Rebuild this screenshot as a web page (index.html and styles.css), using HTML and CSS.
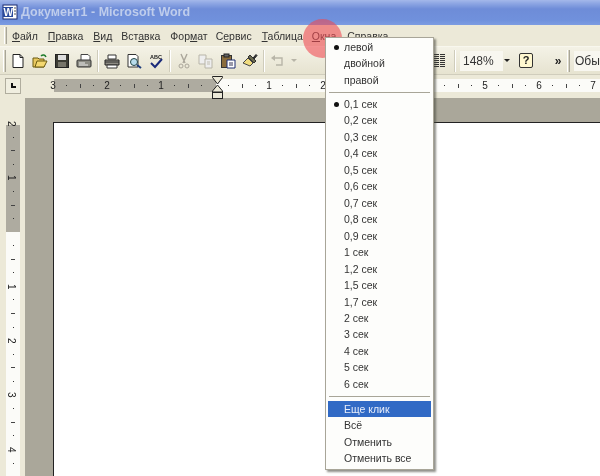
FILE: index.html
```html
<!DOCTYPE html>
<html lang="ru">
<head>
<meta charset="utf-8">
<title>Документ1 - Microsoft Word</title>
<link rel="stylesheet" href="styles.css">
</head>
<body>
<div class="app">
  <header class="titlebar">
    <svg class="word" width="16" height="16" viewBox="0 0 16 16"><rect x="1" y="1" width="14" height="14" fill="#fff" stroke="#1c2c70"/><rect x="1" y="3" width="10" height="10" fill="#2a4a9c"/><text x="1.5" y="11.5" class="wtext">W</text><path d="M12 4h2M12 7h2M12 10h2" stroke="#555"/></svg>
    <span class="titletext">Документ1 - Microsoft Word</span>
  </header>
  <nav class="menubar">
    <i class="grip"></i>
    <span class="mi m1"><u>Ф</u>айл</span>
    <span class="mi m2"><u>П</u>равка</span>
    <span class="mi m3"><u>В</u>ид</span>
    <span class="mi m4">Вст<u>а</u>вка</span>
    <span class="mi m5">Фор<u>м</u>ат</span>
    <span class="mi m6">С<u>е</u>рвис</span>
    <span class="mi m7"><u>Т</u>аблица</span>
    <span class="mi m8"><u>О</u>кна</span>
    <span class="mi m9"><u>С</u>правка</span>
  </nav>
  <div class="toolbar">
    <i class="grip tall"></i>
    <span class="tb"><svg width="16" height="16" viewBox="0 0 16 16"><path d="M3 1.5h7l3 3v10H3z" fill="#fff" stroke="#222"/><path d="M10 1.5v3h3" fill="none" stroke="#222"/></svg></span>
    <span class="tb"><svg width="16" height="16" viewBox="0 0 16 16"><path d="M1 5h5l1 1h5v8H1z" fill="#e8c860" stroke="#6a5a10"/><path d="M3 14l2-6h10l-3 6z" fill="#f4d870" stroke="#6a5a10"/><path d="M9 3c2-2 4-1 5 1" fill="none" stroke="#1c7c2c" stroke-width="1.5"/></svg></span>
    <span class="tb"><svg width="16" height="16" viewBox="0 0 16 16"><rect x="1.5" y="1.5" width="13" height="13" fill="#3c3c34" stroke="#222"/><rect x="4" y="2" width="8" height="5" fill="#ddd"/><rect x="4" y="9" width="8" height="5" fill="#77756a"/></svg></span>
    <span class="tb"><svg width="16" height="16" viewBox="0 0 16 16"><path d="M5 1.5h7l2 2V8H5z" fill="#fff" stroke="#444"/><rect x="1" y="7" width="14" height="7" rx="1" fill="#8c8c84" stroke="#333"/><path d="M3 10h6M3 12h9" stroke="#eee"/></svg></span>
    <i class="tsep s1"></i>
    <span class="tb"><svg width="16" height="16" viewBox="0 0 16 16"><path d="M4 2h8v4H4z" fill="#fff" stroke="#333"/><path d="M1 7h14v5H1z" fill="#8e8c84" stroke="#222"/><path d="M3 12h10v3H3z" fill="#fff" stroke="#333"/><path d="M1 9h14" stroke="#333"/></svg></span>
    <span class="tb"><svg width="16" height="16" viewBox="0 0 16 16"><path d="M2 1.5h8l2 2V14H2z" fill="#fff" stroke="#333"/><circle cx="8" cy="9" r="3.5" fill="#b8dcec" stroke="#244"/><path d="M11 12l4 3" stroke="#1a3a7a" stroke-width="2"/></svg></span>
    <span class="tb"><svg width="16" height="16" viewBox="0 0 16 16"><path d="M3 10l4 4 7-8" fill="none" stroke="#1a2a7a" stroke-width="2"/><text x="2" y="6" class="abc">ABC</text></svg></span>
    <i class="tsep s2"></i>
    <span class="tb"><svg width="16" height="16" viewBox="0 0 16 16" class="dim"><path d="M5 1l4 9M11 1L7 10" stroke="#aaa69a" fill="none" stroke-width="1.4"/><circle cx="5" cy="13" r="2" fill="none" stroke="#aaa69a"/><circle cx="11" cy="13" r="2" fill="none" stroke="#aaa69a"/></svg></span>
    <span class="tb"><svg width="16" height="16" viewBox="0 0 16 16"><path d="M1 2h7v9H1z" fill="#eee" stroke="#b8b5a8"/><path d="M7 6h7v9H7z" fill="#eee" stroke="#b8b5a8"/><path d="M9 9h3M9 11h3" stroke="#c0bdb0"/></svg></span>
    <span class="tb"><svg width="16" height="16" viewBox="0 0 16 16"><rect x="1.5" y="2.5" width="10" height="12" fill="#8a6c3c" stroke="#333"/><rect x="4" y="1" width="5" height="3" fill="#666" stroke="#222"/><path d="M7 7h8v8H7z" fill="#fff" stroke="#1c2c70"/><path d="M9 10h4M9 12h4" stroke="#335"/></svg></span>
    <span class="tb"><svg width="16" height="16" viewBox="0 0 16 16"><path d="M6 5l5 5-3 3-7-3z" fill="#f0dc80" stroke="#444"/><path d="M5 4.500l6 6 2-2-6-6z" fill="#6a6a50" stroke="#333" transform="translate(1 -.5)"/><path d="M11 5l3-3.500 1 1-3 3.500" fill="#333" stroke="#222"/></svg></span>
    <i class="tsep s3"></i>
    <span class="tb"><svg width="16" height="16" viewBox="0 0 16 16"><path d="M3 5h9v7H6" fill="none" stroke="#b8b5a8" stroke-width="1.4"/><path d="M1 5l4-3v6z" fill="#b8b5a8"/></svg></span>
    <span class="drop"></span>
    <span class="right">
      <span class="cols"><i></i><i></i><i></i></span>
      <i class="tsep s4"></i>
      <span class="zoombox">148%</span>
      <span class="arrow"></span>
      <span class="help">?</span>
      <span class="more">»</span>
      <i class="grip tall g2"></i>
      <span class="style">Обычный</span>
    </span>
  </div>
  <div class="rulerrow">
    <span class="tabbtn"><i></i></span>
    <div class="hruler">
      <div class="ticks">
        <b>3</b><s></s><em></em><s></s><b>2</b><s></s><em></em><s></s><b>1</b><s></s><em></em><s></s>
        <b class="none"></b><s></s><em></em><s></s><b>1</b><s></s><em></em><s></s><b>2</b><s></s><em></em><s></s><b>3</b><s></s><em></em><s></s><b>4</b><s></s><em></em><s></s><b>5</b><s></s><em></em><s></s><b>6</b><s></s><em></em><s></s><b>7</b>
      </div>
      <svg class="marker" width="14" height="24" viewBox="0 0 14 24"><path d="M1.500.5h10v1L6.500 8 1.500 1.500z" fill="#ece9d8" stroke="#222"/><path d="M6.500 9l5 6v1h-10v-1z" fill="#ece9d8" stroke="#222"/><rect x="1.500" y="16.500" width="10" height="6" fill="#ece9d8" stroke="#222"/></svg>
    </div>
  </div>
  <div class="work">
    <aside class="vside">
      <div class="vruler">
        <div class="vgrey"><b class="first">2</b><s></s><em></em><s></s><b>1</b><s></s><em></em><s></s></div>
        <div class="vwhite"><s></s><em></em><s></s><b>1</b><s></s><em></em><s></s><b>2</b><s></s><em></em><s></s><b>3</b><s></s><em></em><s></s><b>4</b><s></s><em></em></div>
      </div>
    </aside>
    <main class="desk"><div class="sheet"></div></main>
  </div>
  <div class="spot"></div>
  <div class="popup">
    <div class="pi on">левой</div>
    <div class="pi">двойной</div>
    <div class="pi">правой</div>
    <hr class="h1">
    <div class="pi on">0,1 сек</div>
    <div class="pi">0,2 сек</div>
    <div class="pi">0,3 сек</div>
    <div class="pi">0,4 сек</div>
    <div class="pi">0,5 сек</div>
    <div class="pi">0,6 сек</div>
    <div class="pi">0,7 сек</div>
    <div class="pi">0,8 сек</div>
    <div class="pi">0,9 сек</div>
    <div class="pi">1 сек</div>
    <div class="pi">1,2 сек</div>
    <div class="pi">1,5 сек</div>
    <div class="pi">1,7 сек</div>
    <div class="pi">2 сек</div>
    <div class="pi">3 сек</div>
    <div class="pi">4 сек</div>
    <div class="pi">5 сек</div>
    <div class="pi">6 сек</div>
    <hr>
    <div class="pi sel">Еще клик</div>
    <div class="pi">Всё</div>
    <div class="pi">Отменить</div>
    <div class="pi">Отменить все</div>
  </div>
</div>
</body>
</html>
```
FILE: styles.css
```css
* { box-sizing: border-box; }
html, body { margin: 0; padding: 0; }
body { font-family: "Liberation Sans", Arial, sans-serif; font-size: 10.5px; color: #222; }
.app { position: relative; width: 600px; height: 476px; overflow: hidden; background: #ece9d8; display: flex; flex-direction: column; filter: blur(0.4px); }

.titlebar { height: 25px; flex: none; display: flex; align-items: center; gap: 3px; padding: 0 0 2px 2px;
  background: linear-gradient(#a4b8ea 0, #90a8e4 3px, #6e8cd8 9px, #7091dc 20px, #7c9ce2 25px); }
.word { flex: none; }
.wtext { font: bold 10px "Liberation Sans", sans-serif; fill: #fff; }
.abc { font: bold 5.5px "Liberation Sans", sans-serif; fill: #222; }
.titletext { font-weight: bold; font-size: 12.5px; color: #bfcdec; }

.menubar { height: 21px; flex: none; display: flex; align-items: center; padding-left: 4px; background: #ece9d8; }
.grip { flex: none; width: 3px; height: 17px; border-left: 1px solid #fff; border-right: 1px solid #a8a598; background: #d8d5c4; }
.grip.tall { height: 22px; }
.mi { flex: none; color: #333; }
.m1 { margin-left: 5px; }
.m2 { margin-left: 10px; }
.m3 { margin-left: 10px; }
.m4 { margin-left: 9px; }
.m5 { margin-left: 10px; }
.m6 { margin-left: 8px; }
.m7 { margin-left: 10px; }
.m8 { margin-left: 9px; }
.m9 { margin-left: 11px; }

.toolbar { height: 29px; flex: none; display: flex; align-items: center; padding-left: 3px; background: linear-gradient(#f4f2e6, #e6e3d0); border-top: 1px solid #f8f7ee; border-bottom: 1px solid #d0cdbc; }
.tb { flex: none; width: 22px; height: 22px; display: flex; align-items: center; justify-content: center; }
.toolbar .grip + .tb { margin-left: 1px; }
.tsep { flex: none; width: 2px; height: 22px; background: #cfccbb; border-right: 1px solid #fff; margin: 0 2px; }
.drop { flex: none; width: 0; height: 0; margin-left: 2px; border: 3px solid transparent; border-top-color: #b8b5a8; border-bottom: 0; }
.right { position: absolute; left: 425px; top: 46px; height: 29px; display: flex; align-items: center; }
.cols { flex: none; width: 22px; display: flex; gap: 1px; justify-content: center; height: 13px; }
.cols i { width: 5px; background: repeating-linear-gradient(#333 0 1px, #ece9d8 1px 2px); }
.s4 { margin: 0 4px 0 7px; }
.zoombox { flex: none; width: 43px; height: 20px; background: #f8f7f0; font-size: 12px; line-height: 20px; padding-left: 3px; color: #333; }
.arrow { flex: none; width: 0; height: 0; margin: 0 9px 0 1px; border: 3px solid transparent; border-top-color: #222; border-bottom: 0; }
.help { flex: none; width: 14px; height: 15px; border: 1.5px solid #333; border-radius: 2px; background: #fff8d0; font-size: 11px; font-weight: bold; line-height: 12px; text-align: center; }
.more { flex: none; width: 12px; margin: 0 3px 0 19px; font-weight: bold; font-size: 12px; text-align: center; }
.g2 { margin-right: 4px; }
.style { flex: none; width: 60px; height: 20px; padding-left: 1px; background: #f8f7f0; font-size: 12px; line-height: 20px; color: #333; }

.rulerrow { height: 23px; flex: none; display: flex; align-items: center; padding: 1px 0 3px 5px; background: #ece9d8; }
.tabbtn { flex: none; width: 16px; height: 16px; border: 1px solid #b0ad9e; background: #f0eee0; display: flex; align-items: center; justify-content: center; }
.tabbtn i { width: 5px; height: 5px; border-left: 2px solid #111; border-bottom: 2px solid #111; }
.hruler { position: relative; margin-left: 33px; flex: 1; height: 13px; background: linear-gradient(90deg, #aeaba0 0, #aeaba0 162px, #fbfbf8 162px); }
.ticks { display: flex; align-items: center; height: 13px; margin-left: -7.75px; }
.ticks b, .ticks s, .ticks em { flex: none; width: 13.5px; display: flex; align-items: center; justify-content: center; font-weight: normal; font-style: normal; text-decoration: none; font-size: 10px; color: #222; }
.ticks s::before { content: ""; width: 1px; height: 1px; background: #333; }
.ticks em::before { content: ""; width: 1px; height: 4px; background: #444; }
.marker { position: absolute; left: 157px; top: -3px; }

.work { flex: 1; display: flex; min-height: 0; }
.vside { flex: none; width: 25px; padding: 27px 5px 0 6px; background: #ece9d8; }
.vruler { width: 14px; }
.vgrey { background: #aeaba0; height: 107px; display: flow-root; }
.vwhite { background: #fbfbf8; height: 250px; padding-top: 6.8px; }
.vruler b, .vruler s, .vruler em { display: flex; align-items: center; justify-content: center; height: 13.6px; font-weight: normal; font-style: normal; text-decoration: none; font-size: 10px; color: #222; }
.vruler b { writing-mode: vertical-rl; }
.vruler b.first { margin-top: -8px; }
.vruler s::before { content: ""; width: 1px; height: 1px; background: #333; }
.vruler em::before { content: ""; width: 4px; height: 1px; background: #444; }
.desk { flex: 1; background: #aaa79a; padding: 24px 0 0 28px; }
.sheet { height: 100%; background: #fff; border-left: 1px solid #222; border-top: 1px solid #222; }

.spot { position: absolute; left: 303px; top: 19px; width: 39px; height: 39px; border-radius: 50%; background: rgba(240, 70, 80, .58); }
.popup { position: absolute; left: 325px; top: 37px; width: 109px; height: 433px; padding: 1px 2px; background: #fdfdfb; border: 1px solid #a8a598; box-shadow: 2px 2px 2px rgba(70, 70, 60, .6); }
.pi { position: relative; height: 16.47px; line-height: 16.47px; padding-left: 16px; color: #333; }
.pi.on::before { content: ""; position: absolute; left: 6px; top: 6px; width: 5px; height: 5px; border-radius: 50%; background: #111; }
.pi.sel { background: #316ac5; color: #e8eefa; }
.popup hr { height: 1px; margin: 3.75px 1px; border: 0; background: #a8a598; }
.popup hr.h1 { margin: 3.25px 1px; }
```
